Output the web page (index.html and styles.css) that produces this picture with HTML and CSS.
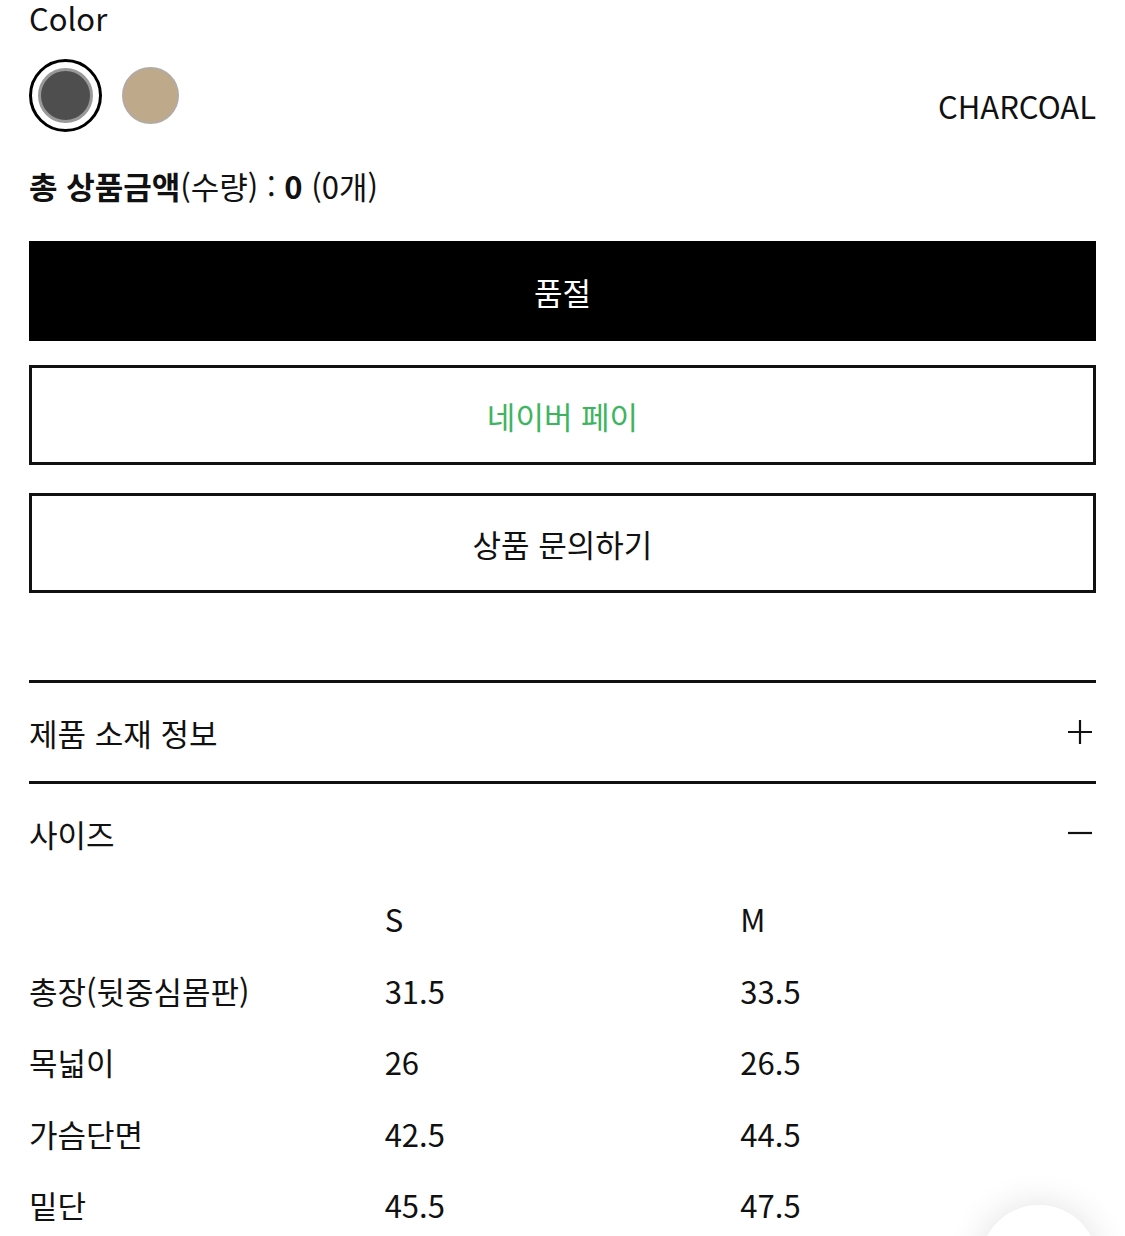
FILE: index.html
```html
<!DOCTYPE html>
<html lang="ko">
<head>
<meta charset="utf-8">
<title>상품 옵션</title>
<link rel="stylesheet" href="styles.css">
</head>
<body>
<div class="page">
  <div class="option-label">Color</div>
  <div class="swatch-row">
    <div class="swatches">
      <div class="swatch-ring"><span class="swatch swatch-charcoal"></span></div>
      <span class="swatch swatch-beige"></span>
    </div>
    <div class="swatch-name">CHARCOAL</div>
  </div>

  <div class="total"><strong>총 상품금액</strong>(수량) : <strong>0</strong> (0개)</div>

  <div class="btn btn-soldout">품절</div>
  <div class="btn btn-outline btn-naver">네이버 페이</div>
  <div class="btn btn-outline btn-qna">상품 문의하기</div>

  <div class="accordion">
    <div class="acc-item">
      <div class="acc-head">
        <span>제품 소재 정보</span>
        <svg class="acc-icon" width="26" height="26" viewBox="0 0 26 26"><path d="M13 1v24M1 13h24" stroke="#111" stroke-width="2.2" fill="none"/></svg>
      </div>
    </div>
    <div class="acc-item">
      <div class="acc-head">
        <span>사이즈</span>
        <svg class="acc-icon" width="26" height="26" viewBox="0 0 26 26"><path d="M1 13h24" stroke="#111" stroke-width="2.2" fill="none"/></svg>
      </div>
      <div class="size-table">
        <div class="cell"></div><div class="cell">S</div><div class="cell">M</div>
        <div class="cell">총장(뒷중심몸판)</div><div class="cell">31.5</div><div class="cell">33.5</div>
        <div class="cell">목넓이</div><div class="cell">26</div><div class="cell">26.5</div>
        <div class="cell">가슴단면</div><div class="cell">42.5</div><div class="cell">44.5</div>
        <div class="cell">밑단</div><div class="cell">45.5</div><div class="cell">47.5</div>
      </div>
    </div>
  </div>
</div>
<div class="float-btn"></div>
</body>
</html>
```

FILE: styles.css
```css
html, body {
  margin: 0;
  padding: 0;
  background: #fff;
}
body {
  font-family: "Noto Sans CJK KR", "Noto Sans", sans-serif;
  color: #111;
  font-size: 31px;
}
.page {
  padding: 0 29px;
}
.option-label {
  font-size: 31px;
  line-height: 36px;
}
.swatch-row {
  margin-top: 23px;
  display: flex;
  justify-content: space-between;
  align-items: flex-end;
}
.swatches {
  display: flex;
  align-items: center;
  gap: 20px;
}
.swatch-ring {
  width: 73px;
  height: 73px;
  box-sizing: border-box;
  border: 3px solid #000;
  border-radius: 50%;
  display: flex;
  align-items: center;
  justify-content: center;
}
.swatch {
  display: block;
  border-radius: 50%;
  box-sizing: border-box;
}
.swatch-charcoal {
  width: 55px;
  height: 55px;
  background: #4e4e4e;
  border: 3px solid #999;
}
.swatch-beige {
  width: 57px;
  height: 57px;
  background: #bea98b;
  border: 2px solid #b3aba2;
}
.swatch-name {
  font-size: 31px;
  line-height: 36px;
  margin-bottom: 8px;
}
.total {
  margin-top: 34px;
  line-height: 40px;
  font-size: 31px;
}
.total strong {
  font-weight: 700;
}
.btn {
  height: 100px;
  box-sizing: border-box;
  display: flex;
  align-items: center;
  justify-content: center;
  font-size: 31px;
}
.btn-soldout {
  margin-top: 35px;
  background: #000;
  color: #fff;
}
.btn-outline {
  border: 3px solid #111;
  background: #fff;
}
.btn-naver {
  margin-top: 24px;
  color: #3db55f;
}
.btn-qna {
  margin-top: 28px;
}
.accordion {
  margin-top: 87px;
}
.acc-item {
  border-top: 3px solid #111;
}
.acc-head {
  height: 98px;
  display: flex;
  align-items: center;
  justify-content: space-between;
  font-size: 31px;
}
.acc-icon {
  margin-right: 3px;
}
.size-table {
  padding-top: 1px;
  display: grid;
  grid-template-columns: 1fr 1fr 1fr;
  grid-auto-rows: 71.5px;
}
.cell {
  display: flex;
  align-items: center;
  font-size: 31px;
}
.float-btn {
  position: fixed;
  left: 980px;
  top: 1205px;
  width: 118px;
  height: 118px;
  border-radius: 50%;
  background: #fff;
  box-shadow: 0 0 36px rgba(0, 0, 0, 0.12);
}
```
